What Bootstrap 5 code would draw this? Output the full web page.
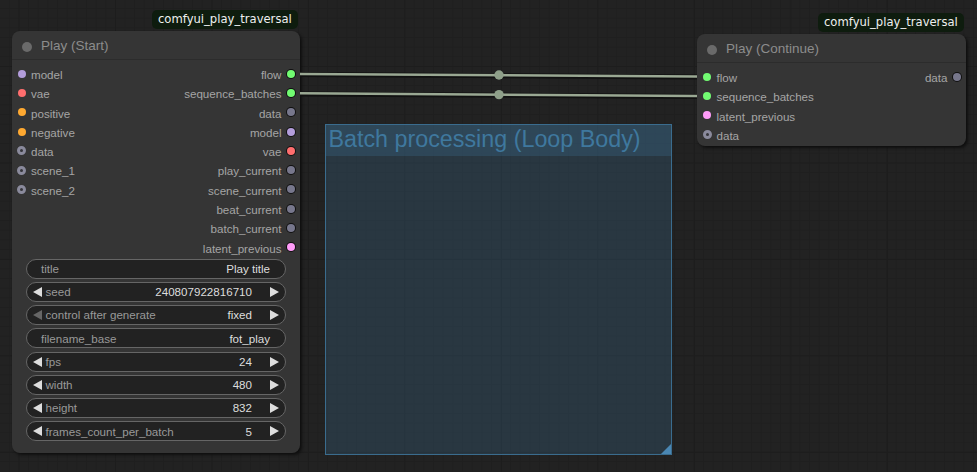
<!DOCTYPE html>
<html lang="en">
<head>
    <meta charset="UTF-8">
    <meta name="viewport" content="width=device-width, initial-scale=1.0">
    <link rel="stylesheet" href="https://cdn.jsdelivr.net/npm/bootstrap@5.3.3/dist/css/bootstrap.min.css">
    <title>Play traversal</title>
    <style>
        html, body { height: 100%; }
        body {
            background-color: #222;
            background-image:
                linear-gradient(#1d1d1d 1px, transparent 1px),
                linear-gradient(90deg, #1d1d1d 1px, transparent 1px),
                linear-gradient(#1f1f1f 1px, transparent 1px),
                linear-gradient(90deg, #1f1f1f 1px, transparent 1px);
            background-size: 96.5px 96.5px, 96.5px 96.5px, 9.65px 9.65px, 9.65px 9.65px;
            background-position: 18.5px 66px, 18.5px 66px, 8.85px 8px, 8.85px 8px;
            font-family: "Liberation Sans", Arial, sans-serif;
            overflow: hidden;
        }
        .canvas-links { left: 0; top: 0; width: 977px; height: 472px; z-index: 2; }
        .node { background: #353535; border-radius: 8px; box-shadow: 2px 2px 3px #0f0f0f; z-index: 1; }
        .node-start { left: 12px; top: 31px; width: 288px; height: 422px; }
        .node-continue { left: 697px; top: 34px; width: 269px; height: 112px; }
        .node-header { height: 29px; padding: 3px 0 0 9.5px; gap: 9.5px; color: #8c8c8c; font-size: 13.5px; border-bottom: 1px solid #2c2c2c; }
        .node-dot { width: 10px; height: 10px; background: #6a6a6a; border-radius: 50%; }
        .badge-tag { background: #0e1c0e; color: #f0f0f0; font-family: "DejaVu Sans", sans-serif; font-size: 11.6px; border-radius: 5px; line-height: 19px; height: 19px; padding: 0 6px; z-index: 1; white-space: nowrap; }
        .badge-start { left: 152px; top: 10px; }
        .badge-continue { left: 818px; top: 13px; }
        .slots { padding-top: 5px; }
        .slot-row { height: 19.3px; font-size: 11.6px; color: #a5a5a5; padding: 0 5px 0 5.5px; }
        .node-continue .slot-row { padding-left: 6px; }
        .side { gap: 5.5px; }
        .port { width: 8px; height: 8px; margin-top: -2px; border-radius: 50%; display: inline-block; box-shadow: 0 0 0 1px #111; flex: none; }
        .port-in { box-shadow: none; }
        .port-hollow { width: 9px; height: 9px; background: #35353a; border: 3px solid #8a8a9c; box-shadow: none; margin-left: -.5px; margin-right: -.5px; }
        .green { background: #72fb72; }
        .purple { background: #b39ddb; }
        .red { background: #ff6e6e; }
        .orange { background: #ffa931; }
        .gray { background: #77778c; }
        .pink { background: #ff9cf9; }
        .widgets { padding: .6px 14px 0; gap: 3.25px; }
        .widget { height: 20px; background: #222; border: 1px solid #666; border-bottom-width: 1.5px; font-size: 11.6px; color: #ddd; padding: 0 6px; }
        .widget-label { color: #999; }
        .widget-text { padding: 0 15px 0 14px; }
        .arrow { width: 0; height: 0; border-top: 5.5px solid transparent; border-bottom: 5.5px solid transparent; flex: none; }
        .arrow-left { border-right: 9.5px solid #ddd; margin-right: 3.5px; }
        .arrow-left.dim { border-right-color: #666; }
        .arrow-right { border-left: 9.5px solid #ddd; margin-left: 18px; }
        .group-box { left: 325px; top: 124px; width: 347px; height: 331px; background: rgba(63, 120, 158, .25); border: 1.5px solid #3a6c8e; }
        .group-title { height: 31px; background: rgba(63, 120, 158, .25); color: #3f789e; font-size: 23.3px; line-height: 29px; padding-left: 2.5px; white-space: nowrap; }
        .group-resize { right: 0; bottom: 0; width: 10px; height: 10px; background: #4a87b3; clip-path: polygon(100% 0, 100% 100%, 0 100%); }
    </style>
</head>
<body>
    <div class="group-box position-absolute">
        <div class="group-title">Batch processing (Loop Body)</div>
        <div class="group-resize position-absolute"></div>
    </div>

    <div class="badge-tag badge-start position-absolute">comfyui_play_traversal</div>
    <div class="node node-start position-absolute">
        <div class="node-header d-flex align-items-center"><span class="node-dot"></span>Play (Start)</div>
        <div id="start-slots" class="slots"></div>
        <div id="start-widgets" class="widgets d-flex flex-column"></div>
    </div>

    <div class="badge-tag badge-continue position-absolute">comfyui_play_traversal</div>
    <div class="node node-continue position-absolute">
        <div class="node-header d-flex align-items-center"><span class="node-dot"></span>Play (Continue)</div>
        <div id="continue-slots" class="slots"></div>
    </div>

    <svg class="canvas-links position-absolute" viewBox="0 0 977 472">
        <path d="M300 74.5 L697 77" stroke="#111" stroke-width="5" fill="none"/>
        <path d="M300 94 L697 96.5" stroke="#111" stroke-width="5" fill="none"/>
        <path d="M300 74 L697 76.5" stroke="#9aa893" stroke-width="2.6" fill="none"/>
        <path d="M300 93.3 L697 96" stroke="#9aa893" stroke-width="2.6" fill="none"/>
        <circle cx="499" cy="75" r="4.7" fill="#8fa08a"/>
        <circle cx="499" cy="94.6" r="4.7" fill="#8fa08a"/>
    </svg>

    <script>
        function renderSlots(id, rows) {
            const box = document.getElementById(id);
            rows.forEach(function (row) {
                const left = row[0] ? `<span class="side d-flex align-items-center"><span class="port port-in ${row[1]}"></span>${row[0]}</span>` : '<span></span>';
                const right = row[2] ? `<span class="side d-flex align-items-center">${row[2]}<span class="port ${row[3]}"></span></span>` : '<span></span>';
                box.insertAdjacentHTML('beforeend', `<div class="slot-row d-flex justify-content-between align-items-center">${left}${right}</div>`);
            });
        }

        function renderWidgets(id, rows) {
            const box = document.getElementById(id);
            rows.forEach(function (row) {
                let html;
                if (row.text) {
                    html = `<div class="widget widget-text rounded-pill d-flex justify-content-between align-items-center"><span class="widget-label">${row.label}</span><span>${row.value}</span></div>`;
                } else {
                    html = `<div class="widget rounded-pill d-flex align-items-center"><span class="arrow arrow-left ${row.dim ? 'dim' : ''}"></span><span class="widget-label flex-grow-1">${row.label}</span><span>${row.value}</span><span class="arrow arrow-right"></span></div>`;
                }
                box.insertAdjacentHTML('beforeend', html);
            });
        }

        renderSlots('start-slots', [
            ['model', 'purple', 'flow', 'green'],
            ['vae', 'red', 'sequence_batches', 'green'],
            ['positive', 'orange', 'data', 'gray'],
            ['negative', 'orange', 'model', 'purple'],
            ['data', 'port-hollow', 'vae', 'red'],
            ['scene_1', 'port-hollow', 'play_current', 'gray'],
            ['scene_2', 'port-hollow', 'scene_current', 'gray'],
            ['', '', 'beat_current', 'gray'],
            ['', '', 'batch_current', 'gray'],
            ['', '', 'latent_previous', 'pink']
        ]);
        renderSlots('continue-slots', [
            ['flow', 'green', 'data', 'gray'],
            ['sequence_batches', 'green', '', ''],
            ['latent_previous', 'pink', '', ''],
            ['data', 'port-hollow', '', '']
        ]);
        renderWidgets('start-widgets', [
            { label: 'title', value: 'Play title', text: true },
            { label: 'seed', value: '240807922816710' },
            { label: 'control after generate', value: 'fixed', dim: true },
            { label: 'filename_base', value: 'fot_play', text: true },
            { label: 'fps', value: '24' },
            { label: 'width', value: '480' },
            { label: 'height', value: '832' },
            { label: 'frames_count_per_batch', value: '5' }
        ]);
    </script>
    <script src="https://cdn.jsdelivr.net/npm/bootstrap@5.3.3/dist/js/bootstrap.bundle.min.js"></script>
</body>
</html>
